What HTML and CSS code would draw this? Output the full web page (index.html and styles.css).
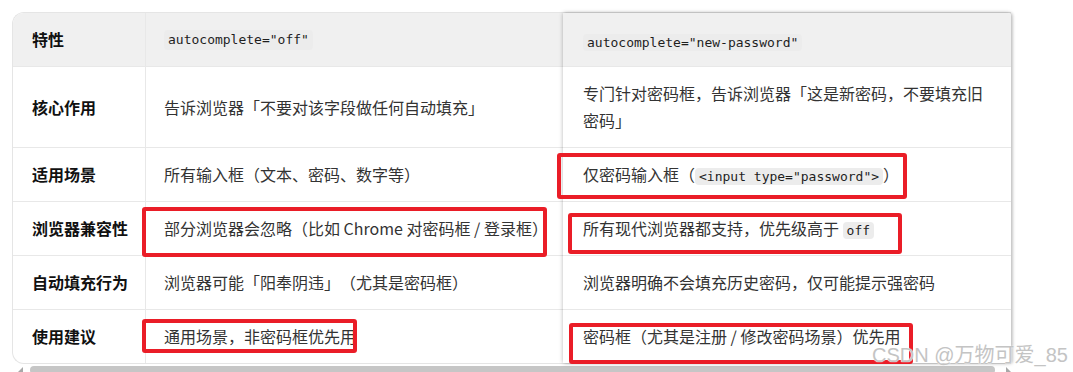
FILE: index.html
```html
<!DOCTYPE html>
<html lang="zh-CN">
<head>
<meta charset="utf-8">
<title>autocomplete 对比</title>
<link rel="stylesheet" href="styles.css">
</head>
<body>
<div class="page">
  <div class="table">
    <div class="cell c1 head tl">特性</div>
    <div class="cell c2 head"><code>autocomplete="off"</code></div>
    <div class="cell c3 head r1"><code>autocomplete="new-password"</code></div>

    <div class="cell c1">核心作用</div>
    <div class="cell c2">告诉浏览器「不要对该字段做任何自动填充」</div>
    <div class="cell c3 r2">专门针对密码框，告诉浏览器「这是新密码，不要填充旧密码」</div>

    <div class="cell c1">适用场景</div>
    <div class="cell c2">所有输入框（文本、密码、数字等）</div>
    <div class="cell c3 r3">仅密码输入框（<code>&lt;input type="password"&gt;</code>）</div>

    <div class="cell c1">浏览器兼容性</div>
    <div class="cell c2">部分浏览器会忽略（比如 Chrome 对密码框 / 登录框）</div>
    <div class="cell c3 r4">所有现代浏览器都支持，优先级高于 <code>off</code></div>

    <div class="cell c1">自动填充行为</div>
    <div class="cell c2">浏览器可能「阳奉阴违」（尤其是密码框）</div>
    <div class="cell c3 r5">浏览器明确不会填充历史密码，仅可能提示强密码</div>

    <div class="cell c1 last bl">使用建议</div>
    <div class="cell c2 last">通用场景，非密码框优先用</div>
    <div class="cell c3 last r6">密码框（尤其是注册 / 修改密码场景）优先用</div>

    <div class="panel"></div>
  </div>

  <div class="scrollbar">
    <span class="arrow-left"></span>
    <span class="thumb"></span>
    <span class="arrow-right"></span>
  </div>

  <div class="mark m1"></div>
  <div class="mark m2"></div>
  <div class="mark m3"></div>
  <div class="mark m4"></div>
  <div class="mark m5"></div>

  <div class="watermark">CSDN @万物可爱_85</div>
</div>
</body>
</html>
```

FILE: styles.css
```css
* { box-sizing: border-box; }

html, body {
  margin: 0;
  padding: 0;
  background: #ffffff;
}

body {
  font-family: "Noto Sans CJK SC", "Noto Sans", sans-serif;
  color: #333333;
  text-spacing-trim: space-all;
}

.page {
  position: relative;
  width: 1073px;
  height: 372px;
  overflow: hidden;
  padding: 12px 0 0 12px;
}

.table {
  display: grid;
  grid-template-columns: 133px 417px 448px;
  width: 999px;
  border: 1px solid #e5e5e5;
  border-right: none;
  border-radius: 12px 0 0 12px;
}

.cell {
  display: flex;
  align-items: center;
  padding: 13px 18px;
  font-size: 16px;
  line-height: 27px;
  border-bottom: 1px solid #e8e8e8;
  color: #333333;
  white-space: nowrap;
}

.cell.last { border-bottom: none; }

.c1 {
  padding-left: 19px;
  padding-right: 8px;
  border-right: 1px solid #e8e8e8;
  font-weight: 700;
  color: #111111;
}

.c3 {
  grid-column: 3;
  padding-left: 20px;
  padding-right: 20px;
  position: relative;
  z-index: 2;
  display: block;
  white-space: normal;
}

.head {
  background: #f0f0f0;
  padding-top: 13px;
  padding-bottom: 13px;
}

.tl { border-top-left-radius: 11px; }
.bl { border-bottom-left-radius: 11px; }

.c3.head { border-top-right-radius: 3px; padding-top: 14px; padding-bottom: 12px; }

.r1 { grid-row: 1; }
.r2 { grid-row: 2; }
.r3 { grid-row: 3; }
.r4 { grid-row: 4; }
.r5 { grid-row: 5; }
.r6 { grid-row: 6; }

.panel {
  grid-column: 3;
  grid-row: 1 / 7;
  position: relative;
  z-index: 1;
  background: #ffffff;
  border-top-right-radius: 3px;
  box-shadow: 0 0 4px rgba(0, 0, 0, 0.28), 2px 0 3px rgba(0, 0, 0, 0.12);
}

code {
  font-family: "DejaVu Sans Mono", "Liberation Mono", monospace;
  font-size: 13px;
  line-height: 18px;
  background: #ececec;
  border-radius: 4px;
  padding: 1px 4px;
  color: #1e1e1e;
}

.scrollbar {
  display: flex;
  align-items: flex-start;
  height: 8px;
  margin-top: 2px;
  margin-left: 6px;
  gap: 7px;
}

.arrow-left {
  width: 0;
  height: 0;
  margin-top: 1px;
  border-bottom: 5px solid #a8a8a8;
  border-left: 5px solid transparent;
}

.thumb {
  width: 965px;
  height: 8px;
  background: #c6c6c6;
  border-radius: 4px;
}

.arrow-right {
  width: 0;
  height: 0;
  margin-top: 1px;
  margin-left: 4px;
  border-bottom: 5px solid #a8a8a8;
  border-right: 5px solid transparent;
}

.mark {
  position: absolute;
  z-index: 5;
  border: 4px solid #ea1d27;
  border-radius: 3px;
}

.m1 { left: 557px; top: 153px; width: 350px; height: 46px; }
.m2 { left: 142px; top: 207px; width: 405px; height: 50px; }
.m3 { left: 568px; top: 213px; width: 334px; height: 41px; }
.m4 { left: 142px; top: 319px; width: 215px; height: 34px; }
.m5 { left: 569px; top: 323px; width: 344px; height: 41px; }

.watermark {
  position: absolute;
  z-index: 6;
  left: 872px;
  top: 345px;
  font-family: "Liberation Sans", "Noto Sans CJK SC", sans-serif;
  font-size: 20px;
  line-height: 20px;
  color: #c4c4c4;
  white-space: nowrap;
  text-shadow: 0 0 1px #ffffff, 0 0 1px #ffffff;
}
```
